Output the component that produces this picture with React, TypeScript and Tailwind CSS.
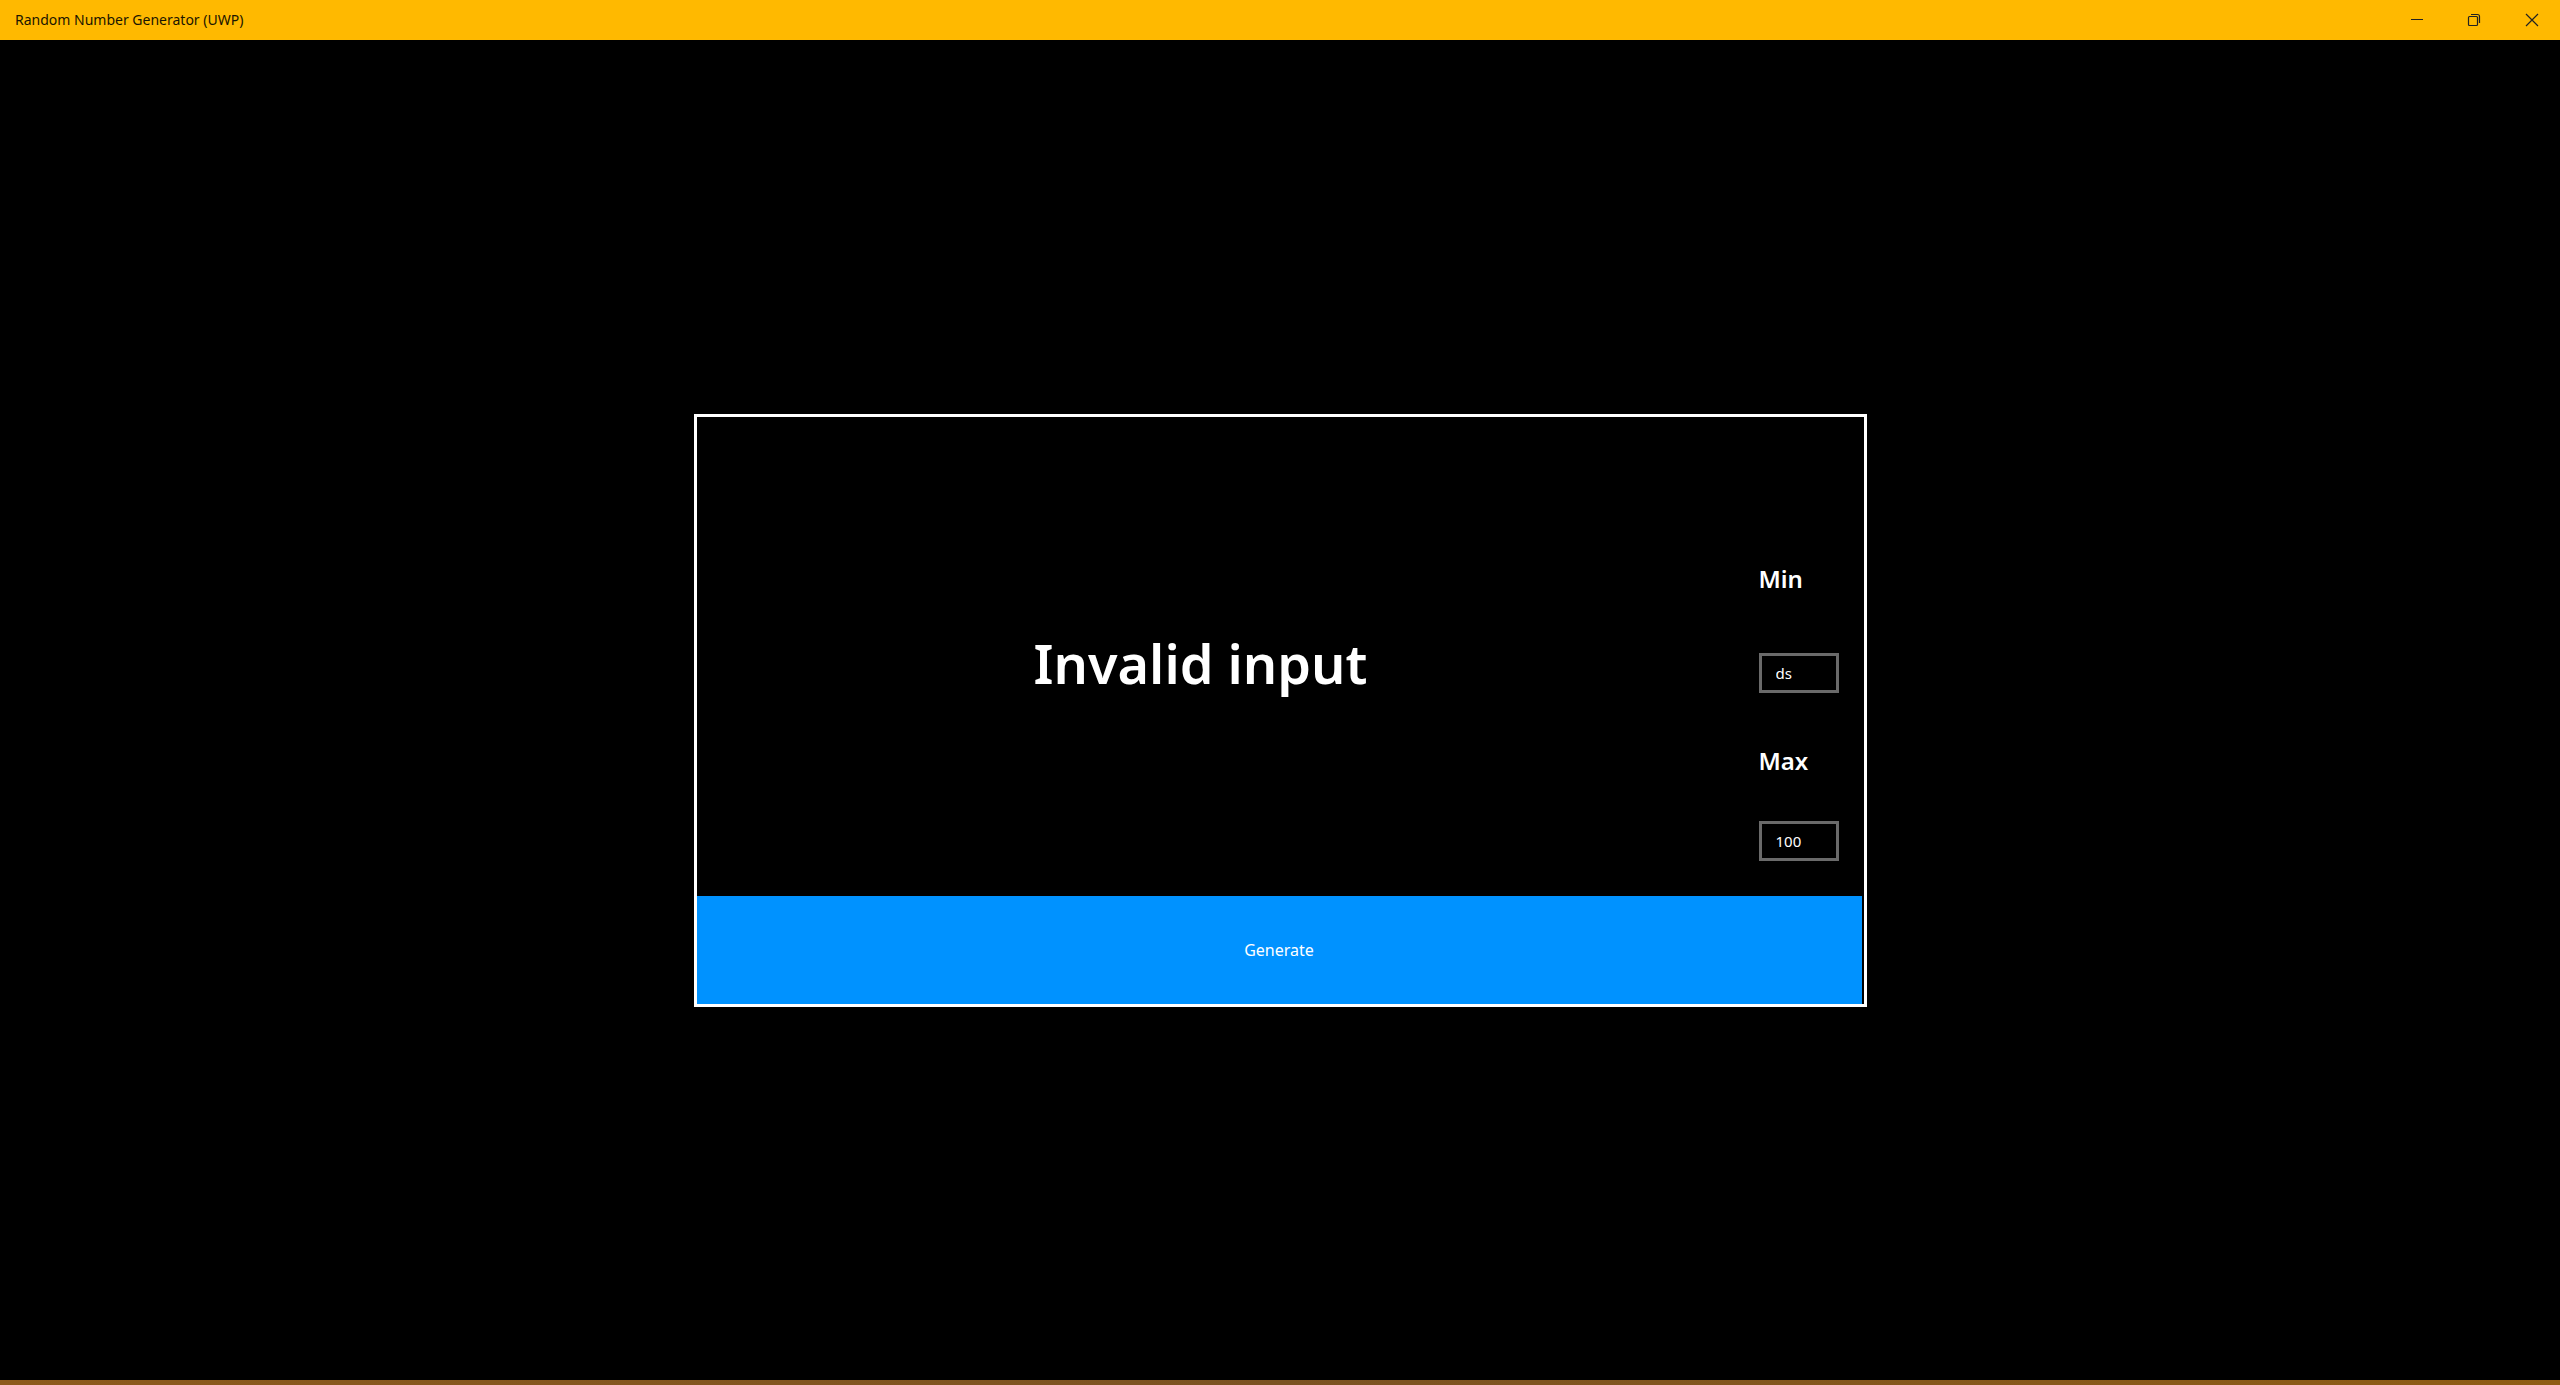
import React from 'react';

function TitleBar() {
  return (
    <div className="h-[40px] bg-[#ffb900] flex items-center justify-between shrink-0">
      <div className="pl-[15px] text-[14px] text-[#1b1500] leading-none">Random Number Generator (UWP)</div>
      <div className="flex h-full">
        <div className="w-[57px] h-full flex items-center justify-center">
          <svg width="14" height="14" viewBox="0 0 14 14" className="text-[#222]">
            <path d="M1 6.5h12" stroke="currentColor" strokeWidth="1" fill="none" />
          </svg>
        </div>
        <div className="w-[58px] h-full flex items-center justify-center">
          <svg width="14" height="14" viewBox="0 0 14 14" className="text-[#222]">
            <rect x="1.5" y="3.5" width="9" height="9" rx="1" stroke="currentColor" strokeWidth="1.2" fill="none" />
            <path d="M4 1.5h6.5a2 2 0 0 1 2 2V10" stroke="currentColor" strokeWidth="1.2" fill="none" />
          </svg>
        </div>
        <div className="w-[57px] h-full flex items-center justify-center">
          <svg width="14" height="14" viewBox="0 0 14 14" className="text-[#222]">
            <path d="M1 1l12 12M13 1L1 13" stroke="currentColor" strokeWidth="1.2" fill="none" />
          </svg>
        </div>
      </div>
    </div>
  );
}

function NumberField({ value }: { value: string }) {
  return (
    <input
      readOnly
      defaultValue={value}
      className="block w-[80px] h-[40px] border-[3px] border-[#6a6a6a] bg-black text-white text-[15px] pl-[14px] outline-none"
      style={{ fontFamily: '"Noto Sans", sans-serif' }}
    />
  );
}

export default function App() {
  return (
    <div className="w-[2560px] h-[1385px] bg-black flex flex-col overflow-hidden" style={{ fontFamily: '"Noto Sans", "Open Sans", sans-serif' }}>
      <TitleBar />
      <main className="flex-1 flex items-center justify-center">
        <div className="w-[1173px] h-[593px] border-[3px] border-white flex flex-col">
          <div className="flex-1 flex">
            <div className="w-[1008px] flex items-center justify-center">
              <h1 className="text-white text-[54px] font-semibold leading-none mb-[-14px]">Invalid input</h1>
            </div>
            <div className="flex-1 flex flex-col pt-[146px] pl-[54px]">
              <div className="text-white text-[24px] font-semibold leading-[32px] h-[32px]">Min</div>
              <div className="mt-[58px]"><NumberField value="ds" /></div>
              <div className="mt-[52px] text-white text-[24px] font-semibold leading-[32px] h-[32px]">Max</div>
              <div className="mt-[44px]"><NumberField value="100" /></div>
            </div>
          </div>
          <button className="h-[108px] mr-[2px] bg-[#0092ff] text-white text-[16px] flex items-center justify-center">
            Generate
          </button>
        </div>
      </main>
      <div className="h-[5px] shrink-0 bg-gradient-to-r from-[#8d5a1c] via-[#7b5222] to-[#8f5c14]" />
    </div>
  );
}
